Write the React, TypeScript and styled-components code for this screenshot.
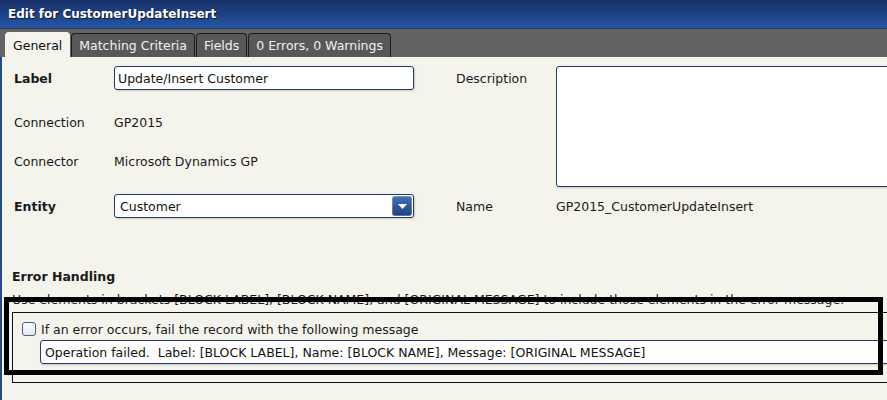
import React from 'react';
import styled, { createGlobalStyle } from 'styled-components';

const GlobalStyle = createGlobalStyle`
	html, body {
		margin: 0;
		padding: 0;
		background: #f4f3ec;
		font-family: "DejaVu Sans", Verdana, sans-serif;
	}
`;

type TabDef = { title: string; active?: boolean };

const tabs: TabDef[] = [
	{ title: 'General', active: true },
	{ title: 'Matching Criteria' },
	{ title: 'Fields' },
	{ title: '0 Errors, 0 Warnings' },
];

export default function App() {
	return <Window>
		<GlobalStyle />
		<TitleBar>Edit for CustomerUpdateInsert</TitleBar>
		<TabStrip>
			{tabs.map(tab => <Tab key={tab.title} active={tab.active}>{tab.title}</Tab>)}
		</TabStrip>
		<Content>
			<FormGrid>
				<FieldLabel bold>Label</FieldLabel>
				<TextInput defaultValue="Update/Insert Customer" />
				<Spacer />
				<FieldLabel col={4}>Description</FieldLabel>
				<TextArea />

				<FieldLabel>Connection</FieldLabel>
				<FieldValue>GP2015</FieldValue>

				<FieldLabel>Connector</FieldLabel>
				<FieldValue>Microsoft Dynamics GP</FieldValue>

				<FieldLabel bold>Entity</FieldLabel>
				<Select>
					<span>Customer</span>
					<DropButton>
						<svg width="9" height="5" viewBox="0 0 9 5"><path d="M0 0h9L4.5 5z" fill="#fff" /></svg>
					</DropButton>
				</Select>
				<Spacer />
				<FieldLabel col={4}>Name</FieldLabel>
				<FieldValue>GP2015_CustomerUpdateInsert</FieldValue>
			</FormGrid>

			<ErrorSection>
				<SectionTitle>Error Handling</SectionTitle>
				<Hint>Use elements in brackets [BLOCK LABEL], [BLOCK NAME], and [ORIGINAL MESSAGE] to include those elements in the error message.</Hint>
				<OptionBox>
					<CheckRow>
						<CheckBox />
						<span>If an error occurs, fail the record with the following message</span>
					</CheckRow>
					<MessageInput defaultValue="Operation failed.  Label: [BLOCK LABEL], Name: [BLOCK NAME], Message: [ORIGINAL MESSAGE]" />
				</OptionBox>
			</ErrorSection>
			<Highlight />
		</Content>
	</Window>;
}

// ================== styled elements =====================

const Window = styled('div')`
	position: relative;
	width: 887px;
	height: 400px;
	overflow: hidden;
	background: #f4f3ec;
	font-size: 12.5px;
	color: #1a1a1a;
`;

const TitleBar = styled('div')`
	display: flex;
	align-items: center;
	height: 28px;
	padding-left: 8px;
	background: linear-gradient(#173167, #1f4488 55%, #2457a6);
	border-bottom: 1px solid #2a3a58;
	color: #fff;
	font-weight: bold;
	font-size: 12px;
	text-shadow: 1px 1px 1px #0b1a36;
`;

const TabStrip = styled('div')`
	display: flex;
	align-items: flex-end;
	gap: 1px;
	height: 28px;
	padding-left: 5px;
	background: #636363;
`;

const Tab = styled('div')<{ active?: boolean }>`
	display: flex;
	align-items: center;
	height: ${props => props.active ? 24 : 23}px;
	padding: 0 7px;
	border: 1px solid ${props => props.active ? '#f4f3ec' : '#1c1c1c'};
	border-bottom: none;
	border-radius: 4px 4px 0 0;
	background: ${props => props.active ? '#f4f3ec' : '#585858'};
	color: ${props => props.active ? '#111' : '#f2f2f2'};
	font-size: 12.5px;
`;

const Content = styled('div')`
	position: relative;
	height: 343px;
	padding: 9px 0 0 12px;
	border-left: 2px solid #24498c;
`;

const FormGrid = styled('div')`
	display: grid;
	grid-template-columns: 100px 300px 42px 100px 340px;
	grid-template-rows: 44px 39px 45px 24px;
	align-items: start;
`;

const FieldLabel = styled('div')<{ bold?: boolean; col?: number }>`
	display: flex;
	align-items: center;
	height: 24px;
	grid-column: ${props => props.col || 1};
	font-weight: ${props => props.bold ? 'bold' : 'normal'};
`;

const FieldValue = styled('div')`
	display: flex;
	align-items: center;
	height: 24px;
`;

const Spacer = styled('div')``;

const inputFrame = `
	box-sizing: border-box;
	border: 1px solid #1f3a6b;
	border-radius: 3px;
	background: #fff;
	box-shadow: 1px 1px 2px rgba(0, 0, 0, 0.18);
	font-family: "DejaVu Sans", Verdana, sans-serif;
	font-size: 12.5px;
	color: #111;
	outline: none;
`;

const TextInput = styled('input')`
	${inputFrame}
	width: 300px;
	height: 24px;
	padding: 0 3px;
`;

const TextArea = styled('textarea')`
	${inputFrame}
	grid-column: 5;
	grid-row: 1 / span 3;
	width: 340px;
	height: 121px;
	resize: none;
`;

const Select = styled('div')`
	${inputFrame}
	display: flex;
	align-items: center;
	justify-content: space-between;
	width: 300px;
	height: 24px;
	padding: 0 1px 0 5px;
`;

const DropButton = styled('div')`
	display: flex;
	align-items: center;
	justify-content: center;
	width: 20px;
	height: 20px;
	border-radius: 3px;
	background: linear-gradient(#4671b3, #1f417e);
	box-shadow: inset 0 0 0 1px rgba(255, 255, 255, 0.25);
`;

const ErrorSection = styled('div')`
	margin: 51px 0 0 -2px;
`;

const SectionTitle = styled('div')`
	font-weight: bold;
	line-height: 16px;
`;

const Hint = styled('div')`
	margin-top: 7px;
	line-height: 16px;
	white-space: nowrap;
`;

const OptionBox = styled('div')`
	box-sizing: border-box;
	width: 900px;
	height: 71px;
	margin-top: 4px;
	padding: 8px 0 0 9px;
	border: 1px solid #111;
`;

const CheckRow = styled('label')`
	display: flex;
	align-items: center;
	gap: 5px;
	height: 16px;
`;

const CheckBox = styled('span')`
	box-sizing: border-box;
	width: 14px;
	height: 14px;
	border: 1px solid #4a5e86;
	border-radius: 3px;
	background: linear-gradient(#fdfdfd, #e4e7ee);
`;

const MessageInput = styled('input')`
	${inputFrame}
	display: block;
	width: 860px;
	height: 24px;
	margin: 3px 0 0 18px;
	padding: 0 4px;
`;

// annotation drawn over the screenshot
const Highlight = styled('div')`
	position: absolute;
	left: 2px;
	top: 240px;
	width: 869px;
	height: 68px;
	border: 5px solid #000;
	pointer-events: none;
`;
